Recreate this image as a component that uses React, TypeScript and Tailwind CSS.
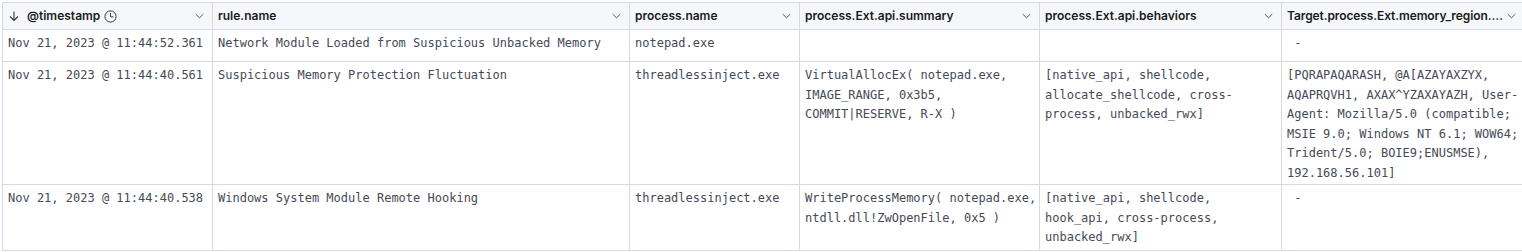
import React from "react";

const W = ["w-[210px]", "w-[417px]", "w-[170px]", "w-[240px]", "w-[242px]", "flex-1"];

function Chevron({ last = false }: { last?: boolean }) {
  return (
    <svg width="9" height="6" viewBox="0 0 9 6" className={last ? "shrink-0 mr-[2px]" : "shrink-0 mr-[3px]"}>
      <path d="M0.8 1.2 L4.5 4.8 L8.2 1.2" fill="none" stroke="#535966" strokeWidth="1" />
    </svg>
  );
}

function SortDown() {
  return (
    <svg width="12" height="12" viewBox="0 0 12 12" className="shrink-0">
      <path d="M6 1.5 V10.5 M2 6.5 L6 10.5 L10 6.5" fill="none" stroke="#343741" strokeWidth="1.1" />
    </svg>
  );
}

function Clock() {
  return (
    <svg width="13" height="13" viewBox="0 0 13 13" className="shrink-0 ml-[4px]">
      <circle cx="6.5" cy="6.5" r="5.6" fill="none" stroke="#343741" strokeWidth="1" />
      <path d="M6.5 3 V6.8 H9.3" fill="none" stroke="#343741" strokeWidth="1" />
    </svg>
  );
}

const headers = [
  "rule.name",
  "process.name",
  "process.Ext.api.summary",
  "process.Ext.api.behaviors",
  "Target.process.Ext.memory_region.malware_signature.all_names",
];

const rows: { h: string; cells: string[][] }[] = [
  {
    h: "h-[32px]",
    cells: [
      ["Nov 21, 2023 @ 11:44:52.361"],
      ["Network Module Loaded from Suspicious Unbacked Memory"],
      ["notepad.exe"],
      [],
      [],
      ["\u00a0-"],
    ],
  },
  {
    h: "h-[123px]",
    cells: [
      ["Nov 21, 2023 @ 11:44:40.561"],
      ["Suspicious Memory Protection Fluctuation"],
      ["threadlessinject.exe"],
      ["VirtualAllocEx( notepad.exe,", "IMAGE_RANGE, 0x3b5,", "COMMIT|RESERVE, R-X )"],
      ["[native_api, shellcode,", "allocate_shellcode, cross-", "process, unbacked_rwx]"],
      [
        "[PQRAPAQARASH, @A[AZAYAXZYX,",
        "AQAPRQVH1, AXAX^YZAXAYAZH, User-",
        "Agent: Mozilla/5.0 (compatible;",
        "MSIE 9.0; Windows NT 6.1; WOW64;",
        "Trident/5.0; BOIE9;ENUSMSE),",
        "192.168.56.101]",
      ],
    ],
  },
  {
    h: "h-[66px]",
    cells: [
      ["Nov 21, 2023 @ 11:44:40.538"],
      ["Windows System Module Remote Hooking"],
      ["threadlessinject.exe"],
      ["WriteProcessMemory( notepad.exe,", "ntdll.dll!ZwOpenFile, 0x5 )"],
      ["[native_api, shellcode,", "hook_api, cross-process,", "unbacked_rwx]"],
      ["\u00a0-"],
    ],
  },
];

export default function App() {
  return (
    <div className="w-[1522px] h-[252px] bg-white overflow-hidden pt-[2px] pl-[2px]">
      <div className="border-l border-t border-[#d3dae6] w-[1520px]">
        {/* header */}
        <div className="flex h-[27px] bg-[#f5f7fa] font-['Inter',sans-serif] text-[12px] font-semibold text-[#1a1c21]">
          <div className={`${W[0]} shrink-0 border-r border-b border-[#d3dae6] flex items-center px-[5px] gap-[7px]`}>
            <SortDown />
            <div className="flex items-center flex-1 min-w-0">
              <span className="whitespace-nowrap">@timestamp</span>
              <Clock />
            </div>
            <Chevron />
          </div>
          {headers.map((t, i) => (
            <div
              key={t}
              className={`${W[i + 1]} shrink-0 min-w-0 border-b ${i < 4 ? "border-r" : ""} border-[#d3dae6] flex items-center pl-[5px] ${i < 4 ? "pr-[5px] gap-[4px]" : "pr-[4px] gap-[3px]"}`}
            >
              <span className={`flex-1 min-w-0 truncate ${i === 4 ? "tracking-[-0.1px]" : ""}`}>{t}</span>
              <Chevron last={i === 4} />
            </div>
          ))}
        </div>
        {/* body */}
        {rows.map((r, ri) => (
          <div key={ri} className={`flex ${r.h} font-['DejaVu_Sans_Mono',monospace] text-[12px] leading-[19.5px] text-[#454a55]`}>
            {r.cells.map((lines, ci) => (
              <div
                key={ci}
                className={`${W[ci]} shrink-0 min-w-0 border-b ${ci < 5 ? "border-r" : ""} border-[#d3dae6] px-[5px] pt-[4px] overflow-hidden`}
              >
                {lines.map((l, li) => (
                  <div key={li} className="whitespace-pre">
                    {l}
                  </div>
                ))}
              </div>
            ))}
          </div>
        ))}
      </div>
    </div>
  );
}
